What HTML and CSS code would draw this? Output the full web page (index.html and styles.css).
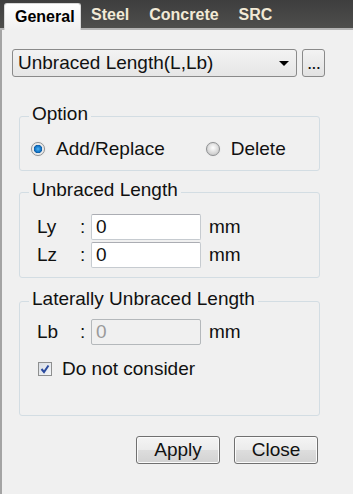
FILE: index.html
```html
<!DOCTYPE html>
<html>
<head>
<meta charset="utf-8">
<link rel="stylesheet" href="styles.css">
</head>
<body>
<div class="tabbar">
  <div class="tab active">General</div>
  <div class="tab">Steel</div>
  <div class="tab">Concrete</div>
  <div class="tab">SRC</div>
</div>
<div class="panel">
  <div class="selrow">
    <div class="select"><span class="sel-text">Unbraced Length(L,Lb)</span><span class="arrow"></span></div>
    <div class="more">...</div>
  </div>

  <fieldset class="group g-option">
    <legend>Option</legend>
    <div class="radios">
      <div class="radio-item"><span class="radio on"></span><span>Add/Replace</span></div>
      <div class="radio-item"><span class="radio"></span><span>Delete</span></div>
    </div>
  </fieldset>

  <fieldset class="group g-unbraced">
    <legend>Unbraced Length</legend>
    <div class="fields">
      <div class="field-row">
        <span class="flabel">Ly</span><span class="colon">:</span><span class="input">0</span><span class="unit">mm</span>
      </div>
      <div class="field-row">
        <span class="flabel">Lz</span><span class="colon">:</span><span class="input">0</span><span class="unit">mm</span>
      </div>
    </div>
  </fieldset>

  <fieldset class="group g-lateral">
    <legend>Laterally Unbraced Length</legend>
    <div class="fields">
      <div class="field-row">
        <span class="flabel">Lb</span><span class="colon">:</span><span class="input disabled">0</span><span class="unit">mm</span>
      </div>
      <div class="check-row">
        <span class="checkbox"><svg width="10" height="10" viewBox="0 0 10 10"><path d="M1.5 5 L4 8 L8.5 1.5" fill="none" stroke="#2a4a9e" stroke-width="2"/></svg></span>
        <span>Do not consider</span>
      </div>
    </div>
  </fieldset>

  <div class="buttons">
    <div class="btn">Apply</div>
    <div class="btn">Close</div>
  </div>
</div>
</body>
</html>
```
FILE: styles.css
```css
html, body {
  margin: 0;
  padding: 0;
  background: #f0f0f0;
  font-family: "Liberation Sans", Arial, sans-serif;
  font-size: 19px;
  color: #111;
}
body {
  width: 353px;
  height: 494px;
  overflow: hidden;
}
.tabbar {
  height: 28px;
  display: flex;
  align-items: flex-end;
  padding-left: 4px;
  background: linear-gradient(#3e3e3e, #4e4e4c);
  border-bottom: 2px solid #b4b4b4;
}
.tab {
  height: 25px;
  line-height: 23px;
  padding: 0 10px;
  font-size: 16px;
  font-weight: bold;
  color: #f2ead6;
  box-sizing: border-box;
}
.tab.active {
  height: 27px;
  margin-bottom: -2px;
  padding: 0 9px 0 10px;
  line-height: 25px;
  color: #000;
  background: linear-gradient(#ffffff, #f0f0f0);
  border: 1px solid #d8d8d8;
  border-bottom: none;
  border-radius: 3px 3px 0 0;
  width: 77px;
}
.panel {
  height: 464px;
  border-left: 2px solid #a4a4a4;
  padding: 19px 0 0 10px;
  box-sizing: border-box;
}
.selrow {
  display: flex;
  align-items: flex-start;
}
.select {
  width: 285px;
  height: 28px;
  box-sizing: border-box;
  border: 1px solid #8a8a8a;
  border-radius: 3px;
  background: linear-gradient(#f3f3f3, #e6e6e6);
  display: flex;
  align-items: center;
  padding-left: 5px;
  line-height: 26px;
}
.arrow {
  margin-left: auto;
  margin-right: 7px;
  width: 0;
  height: 0;
  border-left: 5px solid transparent;
  border-right: 5px solid transparent;
  border-top: 5px solid #000;
}
.more {
  margin-left: 5px;
  width: 23px;
  height: 28px;
  box-sizing: border-box;
  border: 1px solid #8a8a8a;
  border-radius: 3px;
  background: linear-gradient(#f3f3f3, #e2e2e2);
  text-align: center;
  line-height: 26px;
  letter-spacing: -1px;
}
.group {
  margin: 0 0 0 7px;
  width: 301px;
  box-sizing: border-box;
  border: 1px solid #d3dde3;
  border-radius: 3px;
  padding: 0;
  min-width: 0;
}
.group legend {
  margin-left: 9px;
  padding: 0 3px 4px;
  line-height: 22px;
}
.g-option {
  margin-top: 26px;
  padding: 9px 0 10px 0;
}
.radios {
  display: flex;
  gap: 41px;
  padding-left: 11px;
}
.radio-item {
  display: flex;
  align-items: center;
  gap: 11px;
  line-height: 22px;
}
.radio {
  width: 14px;
  height: 14px;
  box-sizing: border-box;
  border-radius: 50%;
  border: 1px solid #8d8f91;
  background: radial-gradient(circle at 50% 40%, #ffffff, #d0d0d0 70%);
  box-shadow: 0 0 1px #c8c8c8;
}
.radio.on {
  background: radial-gradient(circle, #4fb3f2 0, #1a7fd0 2.5px, #0b5aa3 4px, #e6e6e6 4.5px, #f4f4f4 6px);
}
.g-unbraced {
  margin-top: 8px;
  padding: 9px 0 9px 0;
}
.g-lateral {
  margin-top: 10px;
  padding: 5px 0 35px 0;
}
.fields {
  padding-left: 17px;
}
.field-row {
  display: flex;
  align-items: center;
  height: 26px;
  margin-bottom: 2px;
}
.field-row:last-child {
  margin-bottom: 0;
}
.flabel {
  width: 43px;
}
.colon {
  width: 11px;
}
.input {
  width: 110px;
  height: 26px;
  box-sizing: border-box;
  background: #fff;
  border: 1px solid #c6cbd0;
  border-top-color: #abadb3;
  border-radius: 2px;
  padding-left: 4px;
  line-height: 24px;
}
.input.disabled {
  background: #f0f0f0;
  color: #9a9a9a;
  border-color: #b4b8bb;
}
.unit {
  margin-left: 8px;
}
.check-row {
  margin-top: 13px;
  display: flex;
  align-items: center;
  line-height: 22px;
  padding-left: 1px;
}
.checkbox {
  width: 14px;
  height: 14px;
  box-sizing: border-box;
  border: 1px solid #8e8f8f;
  background: linear-gradient(135deg, #d9dde4, #f4f6f8);
  display: flex;
  align-items: center;
  justify-content: center;
  margin-right: 10px;
}
.buttons {
  margin: 20px 0 0 7px;
  width: 301px;
  display: flex;
  justify-content: flex-end;
  gap: 14px;
  padding-right: 2px;
  box-sizing: border-box;
}
.btn {
  width: 84px;
  height: 28px;
  box-sizing: border-box;
  border: 1px solid #707070;
  border-radius: 3px;
  background: linear-gradient(#f4f4f4 0, #ebebeb 50%, #dddddd 51%, #d2d2d2 100%);
  text-align: center;
  line-height: 26px;
  box-shadow: inset 0 0 0 1px #fbfbfb;
}
```
